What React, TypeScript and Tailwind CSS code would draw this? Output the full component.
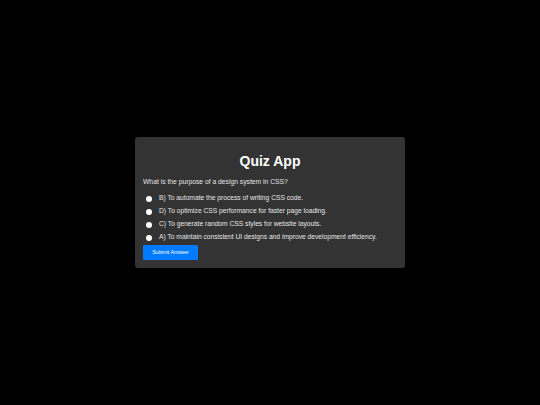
import React from "react";

const options = [
  "B) To automate the process of writing CSS code.",
  "D) To optimize CSS performance for faster page loading.",
  "C) To generate random CSS styles for website layouts.",
  "A) To maintain consistent UI designs and improve development efficiency.",
];

export default function App() {
  return (
    <div
      className="w-[540px] h-[405px] bg-black flex items-center justify-center"
      style={{ fontFamily: '"Liberation Sans", Arial, sans-serif' }}
    >
      <div className="w-[270px] h-[131px] bg-[#333333] rounded-[3px] px-[8px] pt-[16px] pb-[8px] flex flex-col text-white">
        <h1 className="text-[14px] leading-[16px] font-bold text-center">Quiz App</h1>
        <p className="text-[6.75px] leading-[8px] mt-[9px] text-[#e6e6e6]">
          What is the purpose of a design system in CSS?
        </p>
        <div className="flex flex-col mt-[6px]">
          {options.map((o) => (
            <label key={o} className="flex items-center h-[13px] text-[6.7px] text-[#e6e6e6]">
              <span className="w-[6px] h-[6px] rounded-full bg-white ml-[3px] mr-[7px]" />
              {o}
            </label>
          ))}
        </div>
        <button className="mt-[1px] w-[55px] h-[15px] bg-[#007bff] text-white text-[5.5px] leading-[15px] text-center rounded-[1px]">
          Submit Answer
        </button>
      </div>
    </div>
  );
}
